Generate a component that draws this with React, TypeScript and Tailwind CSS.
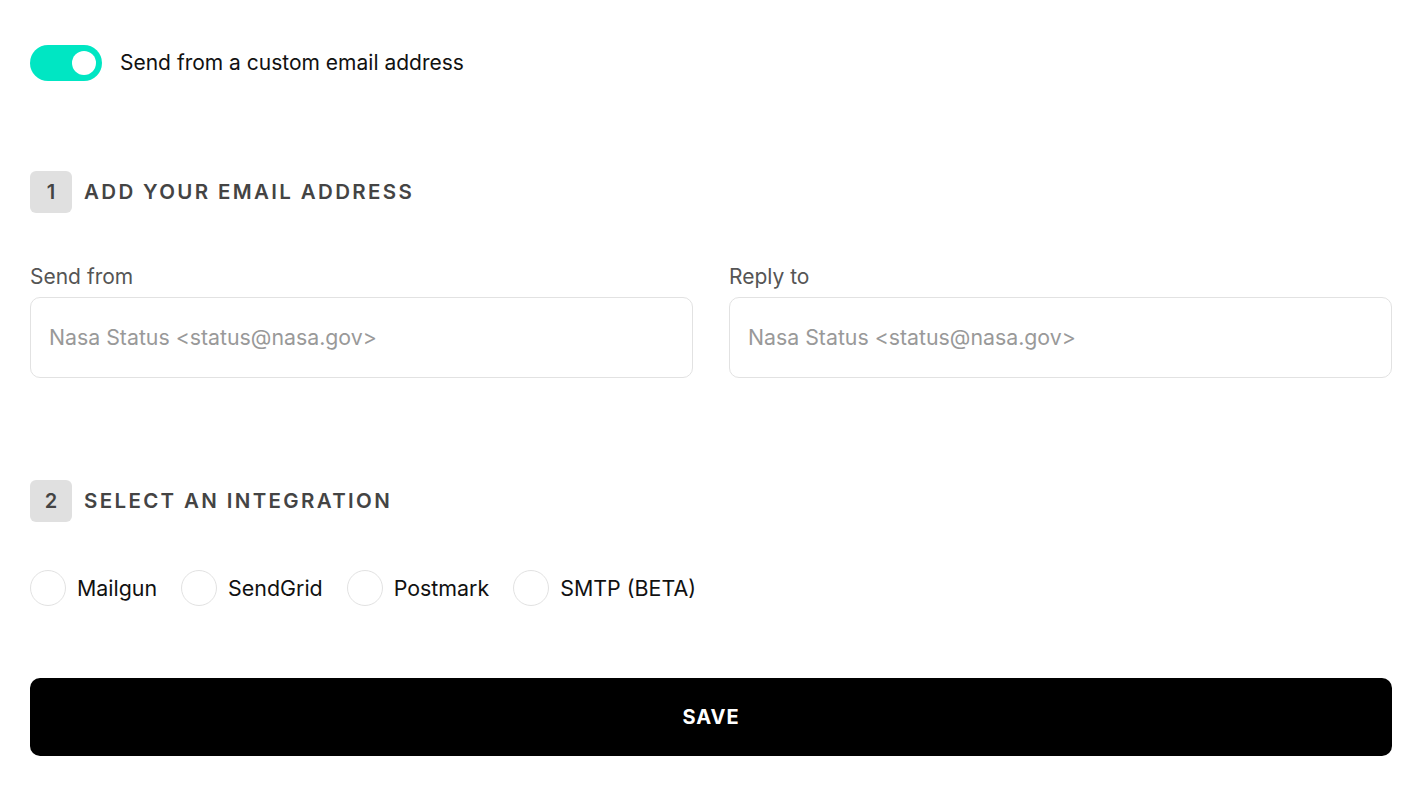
import React from "react";

export default function App() {
  const integrations = ["Mailgun", "SendGrid", "Postmark", "SMTP (BETA)"];
  return (
    <div className="min-h-screen bg-white pl-[30px] pr-[31px] pt-[45px] font-['Inter',sans-serif] text-[21px]">
      <div className="flex items-center gap-[18px]">
        <div className="relative h-[36px] w-[72px] rounded-full bg-[#00e6c3]">
          <div className="absolute right-[6px] top-[6px] h-[24px] w-[24px] rounded-full bg-white" />
        </div>
        <span className="text-[#111]">Send from a custom email address</span>
      </div>

      <div className="mt-[90px] flex items-center gap-[12px]">
        <div className="flex h-[42px] w-[42px] items-center justify-center rounded-[6px] bg-[#e0e0e0] text-[20px] font-semibold text-[#444]">1</div>
        <span className="text-[20.5px] font-semibold tracking-[2.35px] text-[#444]">ADD YOUR EMAIL ADDRESS</span>
      </div>

      <div className="mt-[50px] grid grid-cols-2 gap-[36px]">
        {["Send from", "Reply to"].map((l) => (
          <div key={l} className="flex flex-col">
            <label className="mt-[2px] leading-[24px] text-[#555]">{l}</label>
            <div className="mt-[8px] flex h-[81px] items-center rounded-[10px] border border-[#e2e2e2] px-[18px] text-[21.3px] text-[#999]">
              Nasa Status &lt;status@nasa.gov&gt;
            </div>
          </div>
        ))}
      </div>

      <div className="mt-[102px] flex items-center gap-[12px]">
        <div className="flex h-[42px] w-[42px] items-center justify-center rounded-[6px] bg-[#e0e0e0] text-[20px] font-semibold text-[#444]">2</div>
        <span className="text-[20.5px] font-semibold tracking-[2.35px] text-[#444]">SELECT AN INTEGRATION</span>
      </div>

      <div className="mt-[48px] flex items-center gap-[24px]">
        {integrations.map((n) => (
          <div key={n} className="flex items-center gap-[11px]">
            <div className="h-[36px] w-[36px] rounded-full border border-[#e2e2e2]" />
            <span className="text-[21.4px] text-[#111]">{n}</span>
          </div>
        ))}
      </div>

      <button className="mt-[72px] flex h-[78px] w-full items-center justify-center rounded-[10px] bg-black text-[20px] font-bold tracking-[1px] text-white">
        SAVE
      </button>
    </div>
  );
}
